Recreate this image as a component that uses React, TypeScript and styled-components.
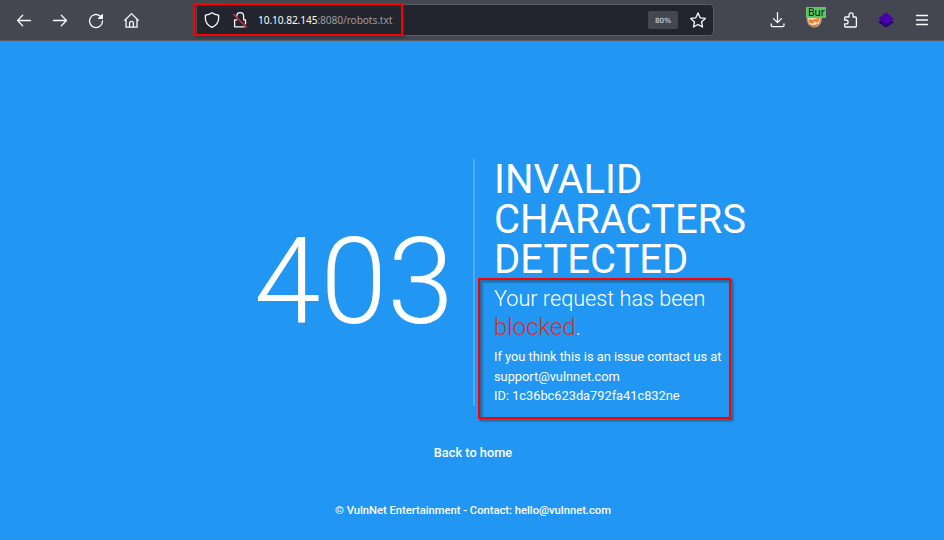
import React from "react";
import styled, { createGlobalStyle } from "styled-components";

const GlobalStyle = createGlobalStyle`
  *, *::before, *::after { box-sizing: border-box; }
  body { margin: 0; background: #2196f3; }
`;

const Window = styled.div`
  position: relative;
  width: 944px;
  height: 540px;
  display: flex;
  flex-direction: column;
  overflow: hidden;
  background: #2196f3;
  color: #fff;
  font-family: Roboto, "Liberation Sans", sans-serif;
`;

const Toolbar = styled.header`
  flex: none;
  height: 41px;
  display: flex;
  align-items: flex-start;
  padding: 0 12px 0 14px;
  background: #44474f;
  border-bottom: 1px solid #5b5b60;
`;

const IconGroup = styled.div<{ $gap: number }>`
  display: flex;
  align-items: center;
  gap: ${(p) => p.$gap}px;
  height: 40px;
`;

const ActionIcons = styled(IconGroup)`
  margin-left: auto;
`;

const Icon = styled.svg`
  display: block;
  flex: none;
  width: 20px;
  height: 20px;
  fill: none;
  stroke: #fbfbfe;
  stroke-width: 1.3;
  stroke-linecap: round;
  stroke-linejoin: round;
`;

const AddressBar = styled.div`
  display: flex;
  align-items: center;
  width: 518px;
  height: 32px;
  margin: 4px 0 0 54px;
  padding: 0 5px;
  background: #23252e;
  border: 1px solid #5a5c63;
  border-radius: 4px;
`;

const Url = styled.span`
  margin-left: 8px;
  flex: 1;
  font: 10.2px "Noto Sans", sans-serif;
  letter-spacing: -0.1px;
  color: #9c9da1;
  white-space: nowrap;
`;

const Host = styled.span`
  color: #fbfbfe;
`;

const Zoom = styled.span`
  width: 30px;
  height: 18px;
  margin-right: 10px;
  border-radius: 2px;
  background: #44474f;
  color: #e4e4e7;
  font: 7.2px/19px "DejaVu Sans", sans-serif;
  text-align: center;
`;

const Extension = styled.div`
  position: relative;
  width: 20px;
  height: 20px;
`;

const Badge = styled.span`
  position: absolute;
  left: 2px;
  top: -3px;
  width: 20px;
  height: 11px;
  padding-left: 2px;
  background: #5dc462;
  color: #111;
  font: 10px/11px "Noto Sans", sans-serif;
`;

const Page = styled.main`
  flex: 1;
  display: flex;
  flex-direction: column;
  align-items: center;
  padding-top: 118px;
`;

const ErrorPanel = styled.section`
  display: grid;
  grid-template-columns: 222px 252px;
  width: 474px;
  height: 246px;
  margin-left: 36px;
`;

const Code = styled.div`
  display: flex;
  align-items: center;
  padding: 0 0 1px 1px;
  border-right: 2px solid #4dabf5;
  font-size: 120px;
  font-weight: 300;
  line-height: 1;
`;

const Details = styled.div`
  padding: 1px 0 0 19px;
  white-space: nowrap;
`;

const Title = styled.h1`
  margin: 0 0 5px;
  font-size: 40px;
  font-weight: 400;
  line-height: 40px;
`;

const Message = styled.h2`
  margin: 0 0 5px;
  font-size: 21.65px;
  font-weight: 300;
  line-height: 28px;
`;

const Blocked = styled.span`
  color: #d8302c;
  font-size: 24px;
`;

const Help = styled.p`
  margin: 0;
  font-size: 12.8px;
  line-height: 19.5px;
`;

const HomeLink = styled.a`
  margin: 38px 0 0 2px;
  color: #fff;
  font-size: 12.8px;
  font-weight: 500;
  line-height: 20px;
`;

const Footer = styled.footer`
  margin: 38px 0 0 2px;
  font-size: 11.2px;
  font-weight: 500;
  line-height: 20px;
`;

const Highlight = styled.div<{ $x: number; $y: number; $w: number; $h: number }>`
  position: absolute;
  left: ${(p) => p.$x}px;
  top: ${(p) => p.$y}px;
  width: ${(p) => p.$w}px;
  height: ${(p) => p.$h}px;
  border: 2px solid #f00;
  filter: drop-shadow(2px 2px 1.2px rgba(40, 45, 55, 0.65));
  pointer-events: none;
`;

export default function App() {
  return (
    <Window>
      <GlobalStyle />
      <Toolbar>
        <IconGroup $gap={16}>
          <Icon viewBox="0 0 20 20"><path d="M16.5 10.5H3.5M8.7 5.3 3.5 10.5l5.2 5.2" /></Icon>
          <Icon viewBox="0 0 20 20"><path d="M3.5 10.5h13M11.3 5.3l5.2 5.2-5.2 5.2" /></Icon>
          <Icon viewBox="0 0 20 20">
            <path d="M14 5.9A6.5 6.5 0 1 0 16.5 11" />
            <path d="M16.3 4.7v3.7h-3.7z" fill="#fbfbfe" />
          </Icon>
          <Icon viewBox="0 0 20 20">
            <path d="M2.8 10.2 9.5 3.6l6.7 6.6M4 9.3v7.9h11V9.3M7.6 17v-3.7a1.9 1.9 0 0 1 3.8 0V17" />
          </Icon>
        </IconGroup>
        <AddressBar>
          <IconGroup $gap={8}>
            <Icon viewBox="0 0 20 20">
              <path d="M10 2.8c1.9 1.4 4.1 2.2 6.6 2.4v3.3c0 3.9-2.3 6.9-6.6 8.8-4.3-1.9-6.6-4.9-6.6-8.8V5.2c2.5-.2 4.7-1 6.6-2.4z" />
            </Icon>
            <Icon viewBox="0 0 20 20">
              <path d="M6.8 6.2a3.4 3.4 0 0 1 6.8-.2v3.8h1.9v4M6.8 9.8H4.6v7h9.6" />
              <path d="m3.5 4.3 13 12.9" stroke="#e52646" />
            </Icon>
          </IconGroup>
          <Url><Host>10.10.82.145</Host>:8080/robots.txt</Url>
          <Zoom>80%</Zoom>
          <Icon viewBox="0 0 20 20">
            <path d="m10 2.9 2.2 4.9 5.1.6-3.8 3.5 1 5.1-4.5-2.5L5.5 17l1-5.1-3.8-3.5 5.1-.6z" />
          </Icon>
        </AddressBar>
        <ActionIcons $gap={16}>
          <Icon viewBox="0 0 20 20">
            <path d="M9.5 2.6v9.8M5.5 8.6l4 4 4-4M3.2 13.8v1.4c0 .8.6 1.4 1.4 1.4h10c.8 0 1.4-.6 1.4-1.4v-1.4" />
          </Icon>
          <Extension>
            <Icon viewBox="0 0 20 20">
              <path d="M2.5 7h15.5c0 6.3-2.8 10.4-7.8 10.4S2.5 13 2.5 7z" fill="#bd9a7d" stroke="none" />
              <path d="M4 8h12c.3 4.5-1.8 8.3-6 8.3S3.7 12.5 4 8z" fill="#f2d7ba" stroke="none" />
              <path d="M4.2 9.4l5 .4 5.5-2 1 2.2-2.2 2.8-3-1.2-1.8 2.2-3.6-1.2z" fill="#e9852e" stroke="none" />
              <path d="M6.5 15.2c2 1.3 5.3 1 7-1" stroke="#d47228" />
            </Icon>
            <Badge>Bur</Badge>
          </Extension>
          <Icon viewBox="0 0 20 20">
            <path d="M5.6 17h9.8c.6 0 1-.4 1-1V8c0-.6-.4-1-1-1h-2.3V4.8a2 2 0 0 0-4 0V7H5.6c-.6 0-1 .4-1 1v2h1.6a1.9 1.9 0 0 1 0 3.8H4.6V16c0 .6.4 1 1 1z" />
          </Icon>
          <Icon viewBox="0 0 20 20">
            <path d="M2.3 12.2 10 7l7.7 5.2-7.7 5.4z" fill="#21006e" stroke="none" />
            <path d="m2.2 8.8 7.8-6.6 7.8 6.6-7.8 6.3z" fill="#4b00ad" stroke="none" />
          </Icon>
          <Icon viewBox="0 0 20 20"><path d="M4.5 5.5h11M4.5 10h11M4.5 14.5h11" /></Icon>
        </ActionIcons>
      </Toolbar>
      <Page>
        <ErrorPanel>
          <Code>403</Code>
          <Details>
            <Title>INVALID<br />CHARACTERS<br />DETECTED</Title>
            <Message>Your request has been<br /><Blocked>blocked</Blocked>.</Message>
            <Help>
              If you think this is an issue contact us at<br />
              support@vulnnet.com<br />
              ID: 1c36bc623da792fa41c832ne
            </Help>
          </Details>
        </ErrorPanel>
        <HomeLink>Back to home</HomeLink>
        <Footer>© VulnNet Entertainment - Contact: hello@vulnnet.com</Footer>
      </Page>
      <Highlight $x={193} $y={3} $w={210} $h={33} />
      <Highlight $x={478} $y={278} $w={253} $h={141} />
    </Window>
  );
}
